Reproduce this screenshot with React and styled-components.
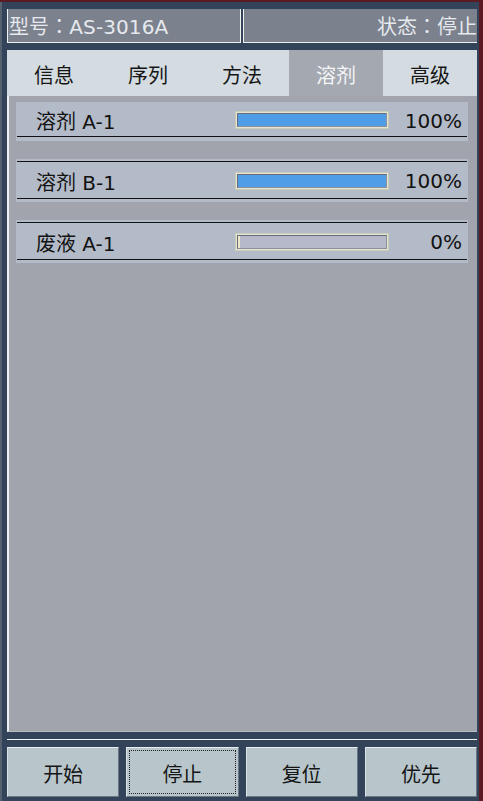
import React from "react";
import styled, { createGlobalStyle } from "styled-components";

const Global = createGlobalStyle`
  html, body { margin: 0; padding: 0; background: #5a1b24; }
  body { font-family: "DejaVu Sans", "Noto Sans CJK SC", sans-serif; }
  * { box-sizing: border-box; }
`;

const Frame = styled.div`
  margin-top: 2px;
  width: 479px;
  height: 799px;
  background: #33435a;
  border-left: 2px solid #56616f;
  padding: 7px 2px 4px 5px;
  display: flex;
  flex-direction: column;
  font-size: 20px;
`;

const Header = styled.div`
  display: grid;
  grid-template-columns: 1fr 1fr;
  column-gap: 2px;
  height: 34px;
  font-family: "DejaVu Sans", "Noto Sans CJK TC", sans-serif;
`;

const HeaderCell = styled.div`
  background: #7b818d;
  color: #e6e9ed;
  border-bottom: 1px solid #eef0f2;
  border-left: 1px solid #eef0f2;
  border-right: ${(p) => (p.$right ? "none" : "1px solid #eef0f2")};
  display: flex;
  align-items: center;
  justify-content: ${(p) => (p.$right ? "flex-end" : "flex-start")};
  padding: 0 0 0 ${(p) => (p.$right ? "0" : "1px")};
  white-space: nowrap;
  letter-spacing: ${(p) => (p.$right ? "0" : "0.1px")};
`;

const Tabs = styled.div`
  margin-top: 7px;
  height: 46px;
  display: grid;
  grid-template-columns: repeat(5, 1fr);
  background: #d4dce1;
`;

const Tab = styled.div`
  display: flex;
  align-items: center;
  justify-content: center;
  padding-top: 2px;
  background: ${(p) => (p.$active ? "#a4a8b0" : "transparent")};
  color: ${(p) => (p.$active ? "#f4f5f6" : "#151515")};
`;

const Content = styled.div`
  flex: 1;
  background: #a1a4ac;
  border-left: 2px solid #eef0f2;
  border-bottom: 1px solid #b9bcc2;
  padding: 6px 9px 0 7px;
  display: flex;
  flex-direction: column;
  gap: 18px;
`;

const Row = styled.div`
  background: #b3bac8;
  padding: ${(p) => (p.$first ? "0 1px 4px" : "2px 1px 3px")};
`;

const RowInner = styled.div`
  height: ${(p) => (p.$first ? "35px" : "38px")};
  border-top: ${(p) => (p.$first ? "none" : "1px solid #111")};
  border-bottom: 1px solid #111;
  display: grid;
  grid-template-columns: 199px 154px 1fr;
  align-items: center;
  padding: ${(p) => (p.$first ? "2px" : "1px")} 5px 0 19px;
  color: #121212;
`;

const Label = styled.span`
  white-space: nowrap;
  padding-top: 1px;
`;

const Percent = styled.span`
  text-align: right;
  padding-top: 1px;
`;

const Bar = styled.div`
  height: 18px;
  border: 1px solid #c9ccb6;
  background: #e3e5d2;
  padding: 1px;
`;

const Track = styled.div`
  height: 100%;
  border: 1px solid #676c78;
  border-right-color: #8c909a;
  border-bottom-color: #8c909a;
  background: #b5b9c9;
  display: flex;
`;

const Fill = styled.div`
  height: 100%;
  background: ${(p) => (p.$empty ? "#ece8c8" : "#4f9de6")};
`;

const Divider = styled.div`
  margin-top: 7px;
  height: 1px;
  background: #f2f4f6;
`;

const Buttons = styled.div`
  margin-top: 7px;
  height: 50px;
  display: grid;
  grid-template-columns: repeat(4, 1fr);
  column-gap: 7px;
`;

const Button = styled.div`
  background: #b8c6cc;
  border-top: 1px solid #e6edf0;
  border-left: 1px solid #dbe3e7;
  border-right: 1px solid #6a7682;
  border-bottom: 1px solid #6a7682;
  display: flex;
  align-items: center;
  justify-content: center;
  padding-top: 3px;
  color: #151515;
  outline: ${(p) => (p.$focus ? "1px dotted #222" : "none")};
  outline-offset: -4px;
`;

const rows = [
  { name: "溶剂 A-1", value: 100 },
  { name: "溶剂 B-1", value: 100 },
  { name: "废液 A-1", value: 0 },
];

const tabs = ["信息", "序列", "方法", "溶剂", "高级"];
const buttons = ["开始", "停止", "复位", "优先"];

export default function App() {
  return (
    <>
      <Global />
      <Frame>
        <Header>
          <HeaderCell>型号：AS-3016A</HeaderCell>
          <HeaderCell $right>状态：停止</HeaderCell>
        </Header>
        <Tabs>
          {tabs.map((t) => (
            <Tab key={t} $active={t === "溶剂"}>
              {t}
            </Tab>
          ))}
        </Tabs>
        <Content>
          {rows.map((r, i) => (
            <Row key={r.name} $first={i === 0}>
              <RowInner $first={i === 0}>
                <Label>{r.name}</Label>
                <Bar>
                  <Track>
                    {r.value > 0 ? (
                      <Fill style={{ width: `${r.value}%` }} />
                    ) : (
                      <Fill $empty style={{ width: "2px" }} />
                    )}
                  </Track>
                </Bar>
                <Percent>{r.value}%</Percent>
              </RowInner>
            </Row>
          ))}
        </Content>
        <Divider />
        <Buttons>
          {buttons.map((b) => (
            <Button key={b} $focus={b === "停止"}>
              {b}
            </Button>
          ))}
        </Buttons>
      </Frame>
    </>
  );
}
